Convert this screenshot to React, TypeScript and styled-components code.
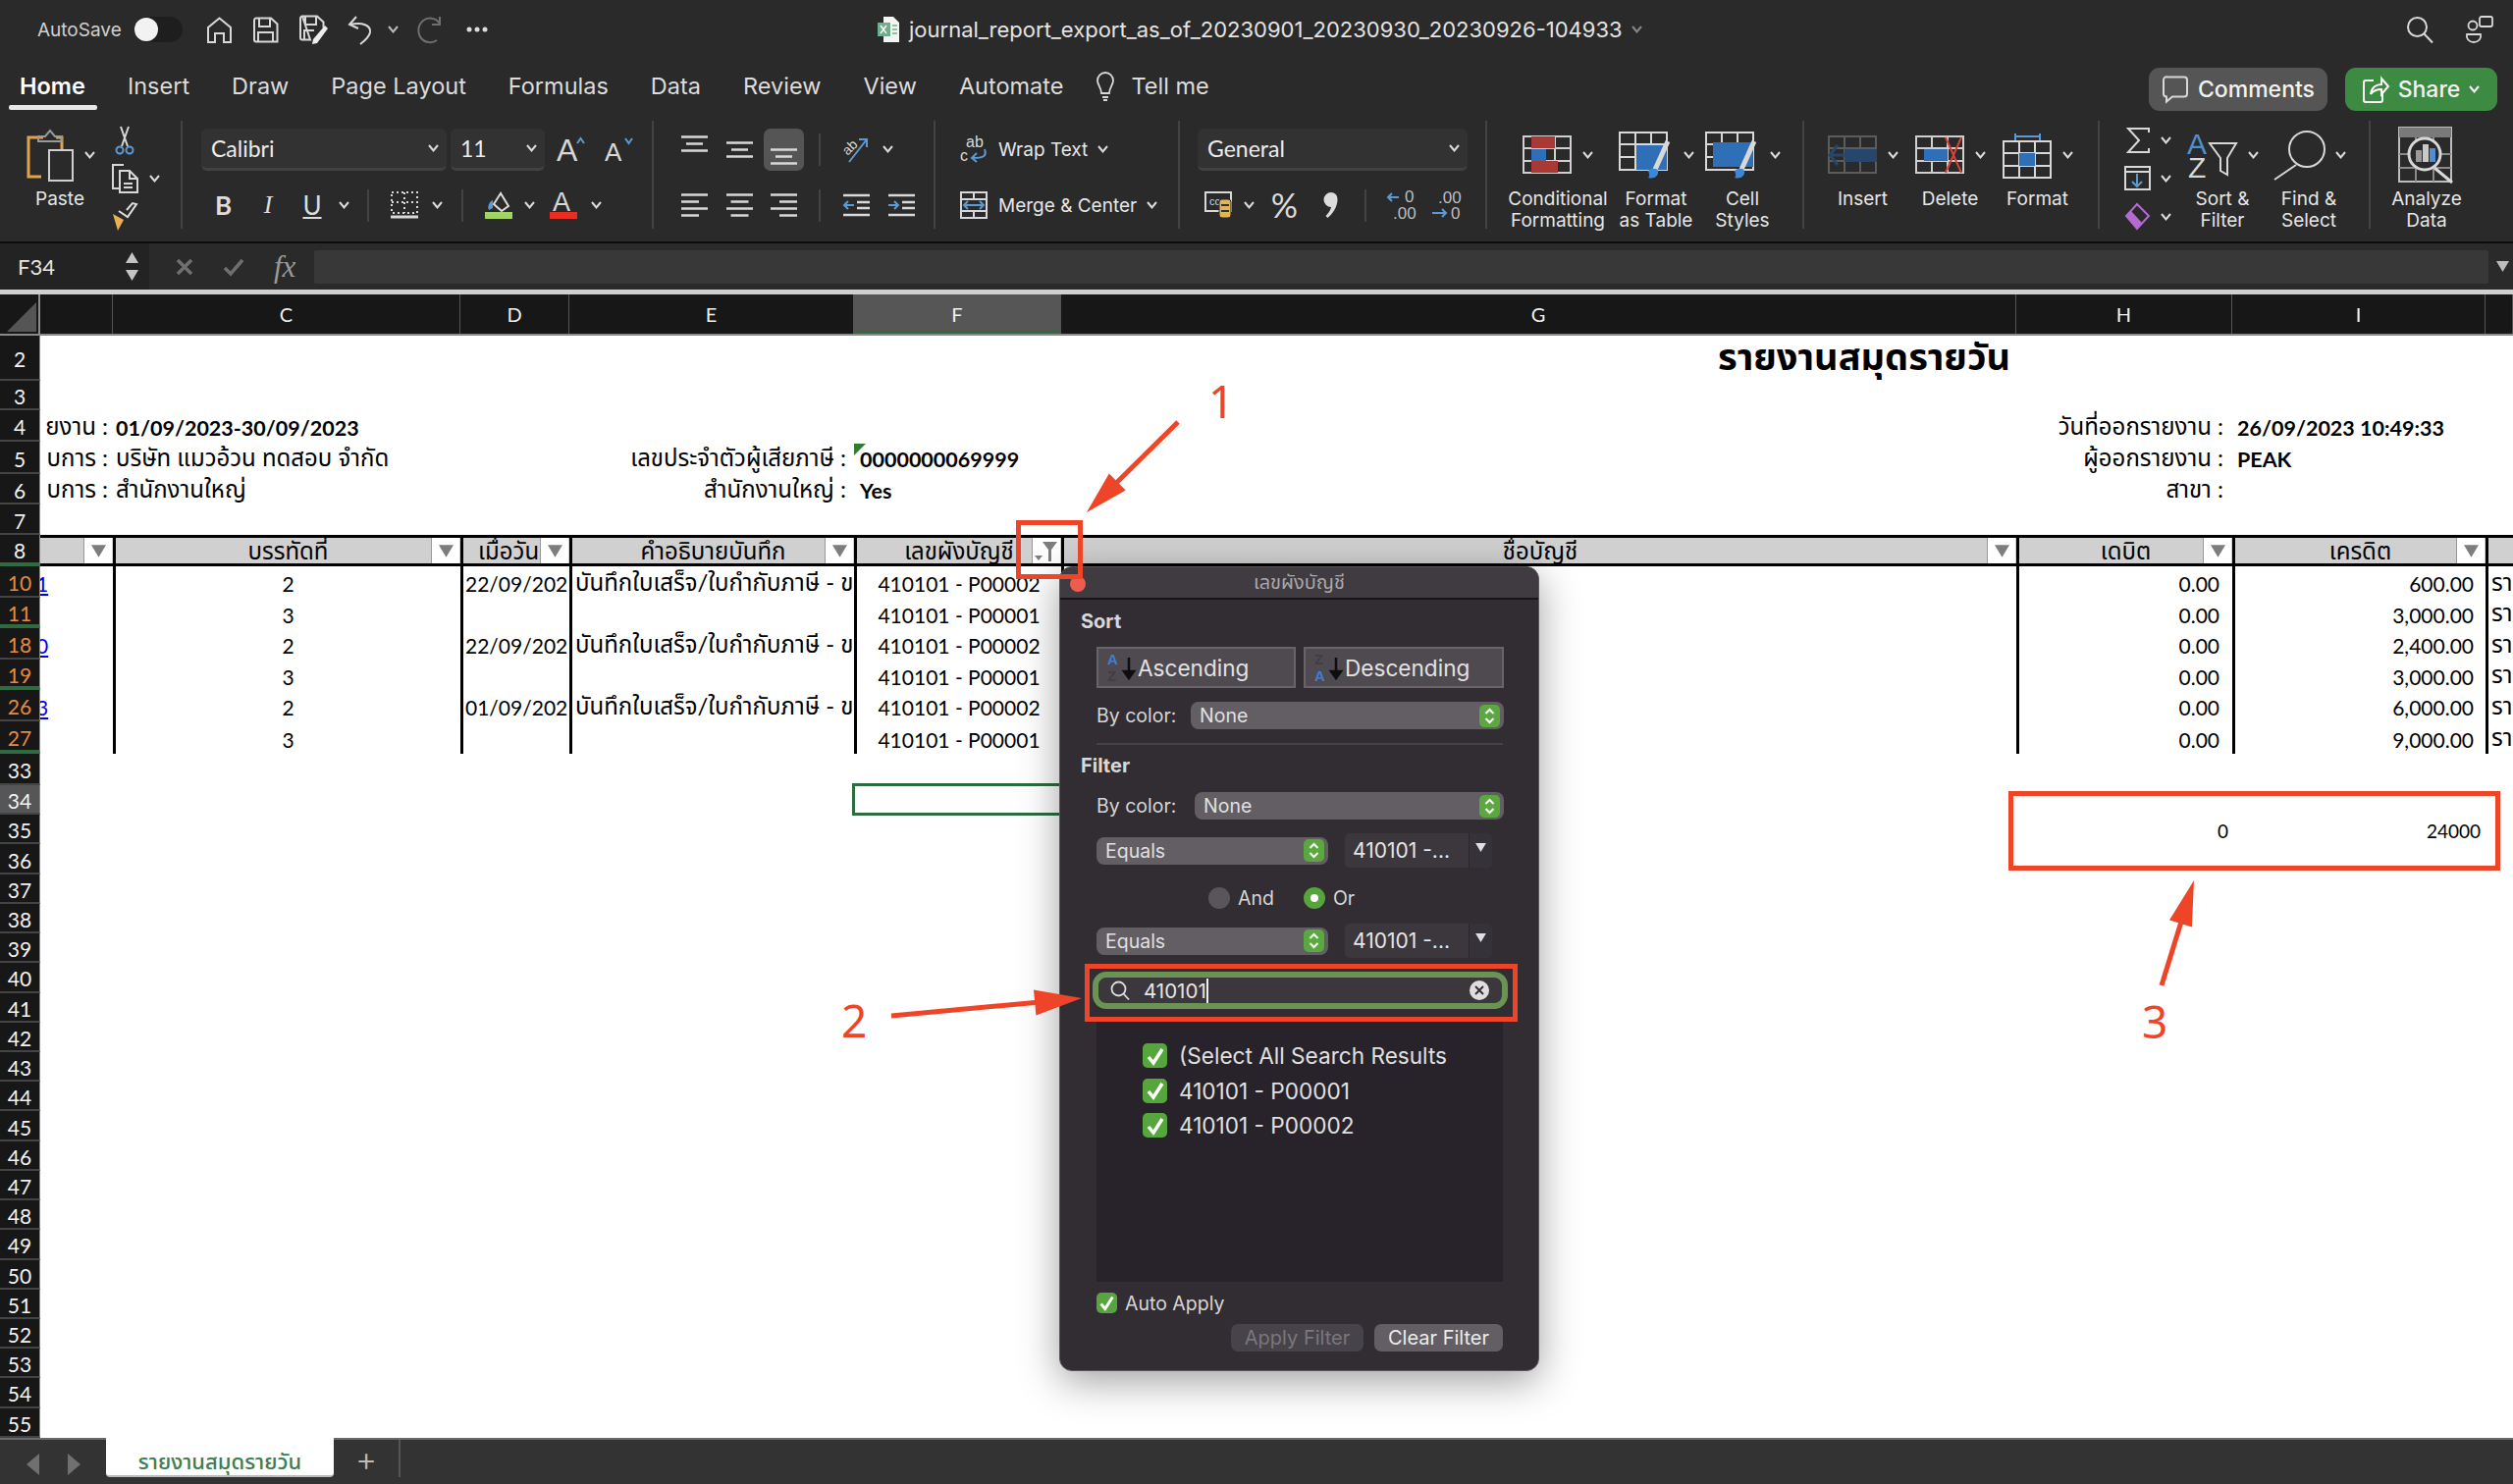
import React from "react";
import styled, { createGlobalStyle } from "styled-components";

const UI = `Inter, "Noto Sans", "Noto Sans Thai", "DejaVu Sans", sans-serif`;
const CELL = `Lato, "Noto Sans Thai", "Noto Sans", "DejaVu Sans", sans-serif`;

const GlobalStyle = createGlobalStyle`
    html, body { margin: 0; padding: 0; background: #2a2a2a; }
    body { font-family: ${UI}; }
    * { box-sizing: border-box; }
`;

const Page = styled.div`
    position: relative;
    width: 2560px;
    height: 1512px;
    overflow: hidden;
    display: flex;
    flex-direction: column;
    background: #2a2a2a;
    color: #e6e6e6;
`;

/* ---------- title bar ---------- */
const TitleBar = styled.div`
    height: 58px;
    display: flex;
    align-items: center;
    padding: 2px 20px 0 38px;
`;
const AutoSave = styled.span`
    width: 99px;
    font-size: 19px;
    color: #d0d0d0;
`;
const Toggle = styled.span`
    width: 49px;
    height: 26px;
    border-radius: 13px;
    background: #1e1e1e;
    display: flex;
    align-items: center;
    &::before {
        content: "";
        width: 24px;
        height: 24px;
        border-radius: 50%;
        background: #f2f2f2;
    }
`;
const QuickSlot = styled.span<{ $w: number }>`
    width: ${(p) => p.$w}px;
    flex: none;
    display: flex;
    align-items: center;
    justify-content: center;
`;
const FileTitle = styled.div`
    margin-left: 372px;
    display: flex;
    align-items: center;
    gap: 9px;
    font-size: 22px;
    color: #e4e4e4;
    white-space: nowrap;
`;
const TitleRight = styled.div`
    margin-left: auto;
    display: flex;
    align-items: center;
    gap: 33px;
`;

/* ---------- tabs ---------- */
const TabRow = styled.div`
    height: 54px;
    display: flex;
    align-items: flex-start;
    padding: 12px 16px 0 20px;
    gap: 43px;
`;
const Tab = styled.div<{ $active?: boolean }>`
    position: relative;
    font-size: 23.5px;
    line-height: 36px;
    font-weight: ${(p) => (p.$active ? 600 : 400)};
    color: ${(p) => (p.$active ? "#fff" : "#dcdcdc")};
    white-space: nowrap;
    ${(p) =>
        p.$active &&
        `&::after {
            content: "";
            position: absolute;
            left: -11px;
            right: -12px;
            bottom: -6px;
            height: 5px;
            border-radius: 2px;
            background: #e8e8e8;
        }`}
`;
const TellMe = styled(Tab)`
    margin-left: -10px;
    display: flex;
    align-items: center;
    gap: 16px;
`;
const TabActions = styled.div`
    margin-left: auto;
    display: flex;
    gap: 18px;
    margin-top: -1px;
`;
const PillButton = styled.div<{ $bg: string; $w: number }>`
    width: ${(p) => p.$w}px;
    height: 44px;
    border-radius: 11px;
    background: ${(p) => p.$bg};
    display: flex;
    align-items: center;
    justify-content: center;
    gap: 9px;
    font-size: 23px;
    font-weight: 500;
    color: #f2f2f2;
`;

/* ---------- ribbon ---------- */
const Ribbon = styled.div`
    height: 136px;
    display: flex;
    padding-top: 11px;
    border-bottom: 2px solid #0c0c0c;
`;
const Group = styled.div<{ $w: number; $pl: number; $last?: boolean; $stack?: boolean }>`
    width: ${(p) => p.$w}px;
    height: 110px;
    padding-left: ${(p) => p.$pl}px;
    flex: none;
    border-right: ${(p) => (p.$last ? "none" : "2px solid #434343")};
    display: ${(p) => (p.$stack ? "grid" : "flex")};
    grid-template-rows: 58px 56px;
    align-items: flex-start;
`;
const ToolRow = styled.div`
    display: flex;
    align-items: center;
    height: 100%;
`;
const Slot = styled.span<{ $w: number; $pb?: number }>`
    width: ${(p) => p.$w}px;
    flex: none;
    display: flex;
    align-items: center;
    justify-content: center;
    padding-bottom: ${(p) => p.$pb ?? 0}px;
`;
const SlotText = styled(Slot)<{ $size: number; $bold?: boolean; $serif?: boolean }>`
    font-family: ${(p) => (p.$serif ? `"Liberation Serif", serif` : CELL)};
    font-size: ${(p) => p.$size}px;
    font-weight: ${(p) => (p.$bold ? 700 : 400)};
    color: #dcdcdc;
    line-height: 1;
`;
const VDiv = styled.span`
    width: 2px;
    height: 33px;
    background: #434343;
`;
const Combo = styled.div<{ $w: number; $ml?: number }>`
    width: ${(p) => p.$w}px;
    margin-left: ${(p) => p.$ml ?? 0}px;
    height: 43px;
    flex: none;
    border-radius: 6px;
    background: #323232;
    border-bottom: 3px solid #424242;
    display: flex;
    align-items: center;
    justify-content: space-between;
    padding: 0 8px 0 10px;
    font-family: ${CELL};
    font-size: 23px;
    color: #ececec;
`;
const AlignActive = styled.span`
    width: 41px;
    height: 43px;
    margin: 0 2px;
    flex: none;
    border-radius: 7px;
    background: #555;
    display: flex;
    align-items: center;
    justify-content: center;
    padding-top: 14px;
`;
const WrapLine = styled.div`
    display: flex;
    align-items: center;
    height: 100%;
    gap: 10px;
    font-size: 19px;
    white-space: nowrap;
`;
const WrapIcon = styled.span`
    width: 30px;
    display: flex;
    justify-content: center;
`;
const BigTool = styled.div<{ $w: number }>`
    width: ${(p) => p.$w}px;
    flex: none;
    display: flex;
    flex-direction: column;
    align-items: center;
`;
const BigIcon = styled.div`
    height: 69px;
    display: flex;
    align-items: center;
    gap: 10px;
`;
const BigLabel = styled.div`
    font-size: 19px;
    line-height: 22px;
    text-align: center;
    white-space: pre-line;
    color: #e6e6e6;
`;
const SmallCol = styled.div<{ $w: number }>`
    width: ${(p) => p.$w}px;
    flex: none;
    display: grid;
    grid-template-rows: repeat(3, 39px);
`;
const SmallTool = styled.div`
    display: flex;
    align-items: center;
    gap: 10px;
`;

/* ---------- formula bar ---------- */
const FormulaBar = styled.div`
    height: 47px;
    display: flex;
    align-items: center;
`;
const NameBox = styled.div`
    width: 152px;
    height: 47px;
    flex: none;
    background: #232323;
    display: flex;
    align-items: center;
    justify-content: space-between;
    padding: 0 11px 0 18px;
    font-family: ${CELL};
    font-size: 22px;
`;
const Spinner = styled.span`
    display: flex;
    flex-direction: column;
    gap: 7px;
`;
const FormulaTools = styled.div`
    width: 168px;
    flex: none;
    display: flex;
    align-items: center;
    padding-left: 27px;
    gap: 30px;
`;
const FormulaFx = styled.span`
    font-family: "Liberation Serif", serif;
    font-style: italic;
    font-size: 31px;
    color: #9a9a9a;
`;
const FormulaInput = styled.div`
    width: 2215px;
    height: 34px;
    background: #383838;
    border-radius: 2px;
    flex: none;
`;
const FormulaDrop = styled.span`
    margin-left: 8px;
    display: flex;
`;
const LightRule = styled.div`
    height: 5px;
    background: #cfcfcf;
`;

/* ---------- sheet ---------- */
const COLUMNS = "41px 74px 354px 111px 290px 211px 973px 220px 258px 28px";

const ColHeader = styled.div`
    height: 42px;
    display: grid;
    grid-template-columns: ${COLUMNS};
    background: #171717;
    border-bottom: 2px solid #8a8a8a;
`;
const ColCell = styled.div<{ $sel?: boolean }>`
    display: flex;
    align-items: center;
    justify-content: center;
    border-right: 1px solid #555;
    font-family: ${CELL};
    font-size: 20px;
    color: #f0f0f0;
    background: ${(p) => (p.$sel ? "#565656" : "transparent")};
    box-shadow: ${(p) => (p.$sel ? "inset 0 -3px 0 #2e6b40" : "none")};
`;
const Corner = styled(ColCell)`
    border-right: 2px solid #8a8a8a;
    align-items: flex-end;
    justify-content: flex-end;
    padding: 0 2px 2px 0;
`;
const SheetBody = styled.div`
    flex: 1;
    background: #fff;
    font-family: ${CELL};
    color: #000;
    font-size: 21px;
`;
const SheetRow = styled.div<{ $h: number }>`
    height: ${(p) => p.$h}px;
    display: grid;
    grid-template-columns: ${COLUMNS};
    grid-template-rows: ${(p) => p.$h}px;
`;
const RowHead = styled.div<{ $tone?: "filtered" | "selected"; $green?: boolean }>`
    grid-column: 1;
    background: ${(p) => (p.$tone === "selected" ? "#565656" : "#171717")};
    color: ${(p) => (p.$tone === "filtered" ? "#e8893c" : "#f2f2f2")};
    border-bottom: ${(p) => (p.$green ? "4px solid #2e6b40" : "2px solid #444")};
    border-right: 1px solid #8a8a8a;
    display: flex;
    align-items: center;
    justify-content: center;
    padding-top: 3px;
    font-size: 21px;
`;
const Cell = styled.div<{
    $col: number;
    $span?: number;
    $align?: "left" | "center" | "right";
    $bold?: boolean;
    $line?: boolean;
    $pad?: number;
    $size?: number;
}>`
    grid-column: ${(p) => p.$col} / span ${(p) => p.$span ?? 1};
    min-width: 0;
    overflow-x: clip;
    overflow-y: visible;
    white-space: nowrap;
    display: flex;
    align-items: center;
    padding-top: 3px;
    justify-content: ${(p) =>
        p.$align === "right" ? "flex-end" : p.$align === "center" ? "center" : "flex-start"};
    padding-left: ${(p) => (p.$align === "right" ? 0 : p.$pad ?? 0)}px;
    padding-right: ${(p) => (p.$align === "right" ? p.$pad ?? 0 : 0)}px;
    font-weight: ${(p) => (p.$bold ? 700 : 400)};
    font-size: ${(p) => p.$size ?? 21}px;
    border-left: ${(p) => (p.$line ? "3px solid #000" : "0")};
`;
const TitleCell = styled(Cell)`
    padding-top: 0;
    overflow: visible;
`;
const LinkText = styled.span`
    color: #0000ee;
    text-decoration: underline;
    margin-left: -4px;
`;
const GreenCorner = styled.span`
    position: absolute;
    left: 870px;
    top: 452px;
    width: 0;
    height: 0;
    border-top: 12px solid #2e7d32;
    border-right: 12px solid transparent;
`;
const HeadCell = styled.div<{ $col: number; $first?: boolean }>`
    grid-column: ${(p) => p.$col};
    min-width: 0;
    background: #d0d0d0;
    border-top: 3px solid #000;
    border-bottom: 3px solid #000;
    border-left: ${(p) => (p.$first ? "0" : "3px solid #000")};
    display: flex;
    align-items: stretch;
`;
const HeadText = styled.div<{ $left?: number }>`
    flex: 1;
    min-width: 0;
    overflow-x: clip;
    overflow-y: visible;
    white-space: nowrap;
    display: flex;
    align-items: center;
    justify-content: ${(p) => (p.$left ? "flex-start" : "center")};
    padding-left: ${(p) => p.$left ?? 30}px;
    padding-top: 3px;
    font-size: 24px;
`;
const FilterBtn = styled.div`
    width: 29px;
    flex: none;
    margin-right: 1px;
    background: #fff;
    border-left: 1px solid #999;
    display: flex;
    align-items: center;
    justify-content: center;
`;
const SelectedCell = styled.div`
    grid-column: 6;
    border: 3px solid #2e6b40;
    margin: -2px -1px -1px -2px;
`;

const SheetTabs = styled.div`
    height: 47px;
    background: #333;
    display: flex;
    align-items: flex-start;
    border-top: 2px solid #6a6a6a;
`;
const TabNav = styled.div`
    width: 108px;
    height: 45px;
    flex: none;
    display: flex;
    align-items: center;
    justify-content: space-around;
    padding: 4px 12px 0 12px;
`;
const SheetTab = styled.div`
    width: 232px;
    height: 40px;
    margin-top: -2px;
    padding-top: 12px;
    background: #fff;
    border-radius: 0 0 4px 4px;
    border-bottom: 2px solid #bbb;
    display: flex;
    align-items: center;
    justify-content: center;
    color: #3d7d52;
    font-family: ${CELL};
    font-size: 22px;
    font-weight: 500;
`;
const AddSheet = styled.div`
    width: 68px;
    height: 38px;
    border-right: 2px solid #555;
    display: flex;
    align-items: center;
    justify-content: center;
    color: #bbb;
    font-size: 34px;
    font-weight: 300;
`;

/* ---------- filter popup ---------- */
const Popup = styled.div`
    position: absolute;
    left: 1079px;
    top: 577px;
    width: 489px;
    height: 820px;
    border-radius: 13px;
    background: #322d33;
    border: 1px solid #5a565b;
    box-shadow: 0 10px 40px rgba(0, 0, 0, 0.38);
    display: flex;
    flex-direction: column;
    overflow: hidden;
    font-size: 19.5px;
    color: #d6d6d6;
`;
const PopupTitle = styled.div`
    position: relative;
    height: 33px;
    flex: none;
    background: #3f3b41;
    border-bottom: 2px solid #171518;
    display: flex;
    align-items: center;
    justify-content: center;
    color: #a9a7aa;
    font-size: 20px;
`;
const RedDot = styled.span`
    position: absolute;
    left: 10px;
    top: 9px;
    width: 16px;
    height: 16px;
    border-radius: 50%;
    background: #ee5c50;
`;
const PopupBody = styled.div`
    padding: 10px 36px 0 37px;
    display: flex;
    flex-direction: column;
`;
const SectionLabel = styled.div<{ $mt?: number }>`
    margin: ${(p) => p.$mt ?? 0}px 0 0 -16px;
    font-weight: 700;
    height: 24px;
    line-height: 24px;
    font-size: 20px;
    color: #d8d8d8;
`;
const SortButtons = styled.div`
    display: grid;
    grid-template-columns: 203px 204px;
    gap: 8px;
    margin-top: 14px;
`;
const SortButton = styled.div`
    height: 42px;
    background: #4f4a50;
    border: 2px solid #686469;
    display: flex;
    align-items: center;
    padding-left: 8px;
    gap: 0;
    font-size: 22.6px;
    color: #e2e2e2;
`;
const FieldRow = styled.div<{ $mt: number }>`
    display: flex;
    align-items: center;
    margin-top: ${(p) => p.$mt}px;
`;
const FieldLabel = styled.span<{ $w: number }>`
    width: ${(p) => p.$w}px;
    flex: none;
`;
const PopSelect = styled.div<{ $w: number }>`
    width: ${(p) => p.$w}px;
    height: 28px;
    flex: none;
    background: #625e63;
    border-radius: 8px;
    display: flex;
    align-items: center;
    justify-content: space-between;
    padding: 0 4px 0 9px;
    color: #e0e0e0;
`;
const Stepper = styled.span`
    width: 21px;
    height: 23px;
    border-radius: 5px;
    background: #5aa83f;
    display: flex;
    align-items: center;
    justify-content: center;
`;
const PopDivider = styled.div`
    height: 2px;
    margin-top: 14px;
    background: #454147;
`;
const ValueBox = styled.div`
    margin-left: 17px;
    width: 150px;
    height: 35px;
    flex: none;
    display: flex;
    border-radius: 5px;
    overflow: hidden;
    background: #3b373d;
    font-size: 21px;
    color: #e6e6e6;
`;
const ValueText = styled.span`
    flex: 1;
    padding-left: 8px;
    display: flex;
    align-items: center;
`;
const ValueDrop = styled.span`
    width: 24px;
    background: #36323a;
    display: flex;
    justify-content: center;
    padding-top: 10px;
    border-left: 1px solid #2a262c;
`;
const RadioRow = styled.div`
    display: flex;
    align-items: center;
    margin: 19px 0 0 114px;
    height: 24px;
`;
const Radio = styled.span<{ $on?: boolean; $ml?: number }>`
    width: 22px;
    height: 22px;
    border-radius: 50%;
    margin-left: ${(p) => p.$ml ?? 0}px;
    margin-right: 8px;
    background: ${(p) => (p.$on ? "#56a53c" : "#59555a")};
    display: flex;
    align-items: center;
    justify-content: center;
    &::after {
        content: "";
        width: 8px;
        height: 8px;
        border-radius: 50%;
        background: ${(p) => (p.$on ? "#fff" : "transparent")};
    }
`;
const SearchField = styled.div`
    margin: 14px 0 0 -4px;
    width: 423px;
    height: 38px;
    flex: none;
    border: 6px solid #6b9454;
    border-radius: 14px;
    background: #3b373d;
    display: flex;
    align-items: center;
    padding: 0 13px 0 12px;
    font-size: 20.5px;
    color: #e6e6e6;
`;
const SearchValue = styled.span`
    margin-left: 14px;
    flex: 1;
    display: flex;
    align-items: center;
`;
const Caret = styled.span`
    width: 2px;
    height: 25px;
    background: #eee;
`;
const ClearCircle = styled.span`
    width: 20px;
    height: 20px;
    border-radius: 50%;
    background: #dedede;
    color: #333;
    display: flex;
    align-items: center;
    justify-content: center;
`;
const ValueList = styled.div`
    margin-top: 12px;
    height: 266px;
    background: #28232a;
    padding: 23px 0 0 47px;
    display: flex;
    flex-direction: column;
    gap: 10.5px;
`;
const ListItem = styled.div`
    display: flex;
    align-items: center;
    gap: 12px;
    font-size: 22.6px;
    height: 25px;
    color: #e0e0e0;
`;
const CheckBox = styled.span<{ $s: number }>`
    width: ${(p) => p.$s}px;
    height: ${(p) => p.$s}px;
    flex: none;
    border-radius: 5px;
    background: #57a63d;
    display: flex;
    align-items: center;
    justify-content: center;
`;
const AutoApply = styled.div`
    margin-top: 11px;
    display: flex;
    align-items: center;
    gap: 8px;
    height: 21px;
`;
const PopActions = styled.div`
    margin-top: 11px;
    display: flex;
    justify-content: flex-end;
    gap: 11px;
`;
const PopAction = styled.div<{ $w: number; $off?: boolean }>`
    width: ${(p) => p.$w}px;
    height: 28px;
    border-radius: 7px;
    background: ${(p) => (p.$off ? "#47434a" : "#625e63")};
    color: ${(p) => (p.$off ? "#7a777c" : "#ececec")};
    display: flex;
    align-items: center;
    justify-content: center;
    font-size: 20px;
`;

/* ---------- annotations ---------- */
const RedBox = styled.div<{ $x: number; $y: number; $w: number; $h: number }>`
    position: absolute;
    left: ${(p) => p.$x}px;
    top: ${(p) => p.$y}px;
    width: ${(p) => p.$w}px;
    height: ${(p) => p.$h}px;
    border: 5px solid #ee4528;
`;
const Callout = styled.div<{ $x: number; $y: number }>`
    position: absolute;
    left: ${(p) => p.$x}px;
    top: ${(p) => p.$y}px;
    font-family: "Noto Sans", sans-serif;
    font-size: 46px;
    line-height: 50px;
    color: #ee4528;
`;
const ArrowLayer = styled.svg`
    position: absolute;
    left: 0;
    top: 0;
    pointer-events: none;
`;

/* ---------- icons ---------- */
const STROKE = "#d8d8d8";
const IconSvg = styled.svg`
    flex: none;
    display: block;
    overflow: visible;
`;
const Svg = ({ w, h, children, stroke = STROKE, sw = 2 }: { w: number; h: number; children?: React.ReactNode; stroke?: string; sw?: number }) => (
    <IconSvg width={w} height={h} viewBox={`0 0 ${w} ${h}`} fill="none" stroke={stroke} strokeWidth={sw}>
        {children}
    </IconSvg>
);
const Chev = ({ color = "#dcdcdc" }: { color?: string }) => (
    <Svg w={11} h={8} stroke={color} sw={2}>
        <path d="M1 1l4.500 5.500L10 1" />
    </Svg>
);
const Tri = ({ up, color = "#9a9a9a", w = 13, h = 11 }: { up?: boolean; color?: string; w?: number; h?: number }) => (
    <IconSvg width={w} height={h} viewBox="0 0 12 10">
        <path d={up ? "M6 0l6 10H0z" : "M0 0h12L6 10z"} fill={color} />
    </IconSvg>
);
const HomeIcon = () => (
    <Svg w={27} h={27}><path d="M2 26V11L13.500 1.500 25 11v15h-7v-9H9v9z" /></Svg>
);
const SaveIcon = () => (
    <Svg w={27} h={27}><path d="M4 1.500h15l6.500 6v18H4a2 2 0 0 1-2-2v-20a2 2 0 0 1 2-2z" /><path d="M7 2v8h11V2M6 25v-9h15v9" /></Svg>
);
const SaveAsIcon = () => (
    <Svg w={30} h={30}>
        <path d="M4 1.500h15l6.500 6v6M12 25.500H4a2 2 0 0 1-2-2v-20a2 2 0 0 1 2-2z" /><path d="M7 2v8h11V2M6 25v-9h10" />
        <path d="M27 11l3 3-11 15-5 1 1-5z" fill="#eee" stroke="none" />
    </Svg>
);
const UndoIcon = () => (
    <Svg w={26} h={29}><path d="M9 1L2 9l9 4M3 9c12-3 21 1 20 8-1 5-6 9-10 12" /></Svg>
);
const RedoIcon = () => (
    <Svg w={27} h={29} stroke="#6f6f6f"><path d="M24 8C20 2 12 1 7 5c-6 5-6 14-1 19 4 4 11 4 15 1M24 1v8h-8" /></Svg>
);
const ExcelFile = () => (
    <IconSvg width={23} height={26} viewBox="0 0 23 26">
        <path d="M6 0h10l6 6v20H6z" fill="#f4f4f4" />
        <rect x="0" y="6" width="13" height="14" fill="#6fae8a" />
        <path d="M3 9l6 8M9 9l-6 8" stroke="#fff" strokeWidth="1.500" />
        <path d="M15 9h5M15 13h5M15 17h5" stroke="#8cc3a0" strokeWidth="2" />
    </IconSvg>
);
const SearchIcon = () => (
    <Svg w={28} h={28}><circle cx="11.500" cy="11.500" r="9.500" /><path d="M18 18l9 9.500" /></Svg>
);
const PeopleIcon = () => (
    <Svg w={28} h={28} sw={1.800}><rect x="14" y="1" width="13" height="10" rx="2" /><circle cx="7" cy="10" r="4.500" /><path d="M1 19h14c1 4-2 8-7 8s-8-4-7-8z" /></Svg>
);
const BulbIcon = () => (
    <Svg w={20} h={30} sw={1.800}><path d="M6 22c0-6-4-8-4-13a8 8 0 0 1 16 0c0 5-4 7-4 13zM7 26h6M8 29h4" /></Svg>
);
const CommentIcon = () => (
    <Svg w={28} h={28}><path d="M6 1.500h17a3 3 0 0 1 3 3v14a3 3 0 0 1-3 3H11l-6 5v-5a3 3 0 0 1-3-3v-14a3 3 0 0 1 4-3z" /></Svg>
);
const ShareIcon = () => (
    <Svg w={27} h={28} stroke="#fff"><path d="M11 5H3a2 2 0 0 0-2 2v18a2 2 0 0 0 2 2h15a2 2 0 0 0 2-2v-7M8 19c1-7 6-10 11-10V3l7 8-7 8v-5c-4 0-8 1-11 5z" /></Svg>
);
const PasteIcon = () => (
    <Svg w={50} h={54}>
        <path d="M18 9H3v40h13" stroke="#e2a34a" strokeWidth="3" />
        <path d="M31 9h6v12" stroke="#e2a34a" strokeWidth="3" />
        <path d="M13 13h24V8h-7l-5-6-5 6h-7z" stroke="#9a9a9a" />
        <rect x="24" y="22" width="24" height="31" fill="#2a2a2a" stroke="#cfcfcf" />
    </Svg>
);
const ScissorsIcon = () => (
    <Svg w={20} h={30}>
        <path d="M14 1L7 21M6 1l7 20" />
        <circle cx="5" cy="25" r="3.500" stroke="#5b9bd5" /><circle cx="15" cy="25" r="3.500" stroke="#5b9bd5" />
    </Svg>
);
const CopyIcon = () => (
    <Svg w={29} h={30}>
        <path d="M13 1H2v24h6" /><path d="M9 7h10l8 8v14H9z" /><path d="M19 7v8h8M13 20h9M13 24h9" />
    </Svg>
);
const BrushIcon = () => (
    <IconSvg width={30} height={30} viewBox="0 0 30 30">
        <path d="M3 12l11 6-6 11z" fill="#eab04f" />
        <path d="M9 9l9 6 9-13-4-1-6 7" fill="none" stroke="#ddd" strokeWidth="2" />
    </IconSvg>
);
const FontGrow = ({ up }: { up: boolean }) => (
    <Svg w={32} h={28}>
        <text x="2" y="26" fontSize={up ? 32 : 26} fill="#d8d8d8" stroke="none" fontFamily="Liberation Sans">A</text>
        <path d={up ? "M23 8l3.500-5 3.500 5" : "M23 3l3.500 5 3.500-5"} stroke="#5b9bd5" />
    </Svg>
);
const BorderIcon = () => (
    <Svg w={28} h={28}>
        <rect x="1" y="1" width="26" height="21" strokeDasharray="2 3" />
        <path d="M14 1v21M1 11h26" strokeDasharray="2 3" />
        <path d="M0 26h28" strokeWidth="3" />
    </Svg>
);
const FillIcon = () => (
    <IconSvg width={30} height={30} viewBox="0 0 30 30">
        <path d="M10 14L17 3l8 13-7 5z" fill="none" stroke="#ddd" strokeWidth="2" />
        <path d="M5 20c-2-4 1-9 4-10v8z" fill="#5b9bd5" />
        <rect x="1" y="22" width="28" height="7" fill="#a2d465" />
    </IconSvg>
);
const FontColorIcon = () => (
    <IconSvg width={30} height={30} viewBox="0 0 30 30">
        <text x="4" y="21" fontSize="27" fill="#d8d8d8" fontFamily="Liberation Sans">A</text>
        <rect x="1" y="22" width="28" height="7" fill="#ea2d21" />
    </IconSvg>
);
const Lines = ({ w, lens, align = "left", gap = 7 }: { w: number; lens: number[]; align?: "left" | "center" | "right"; gap?: number }) => (
    <Svg w={w} h={(lens.length - 1) * gap + 3} sw={2.500}>
        {lens.map((len, i) => {
            const x = align === "center" ? (w - len) / 2 : align === "right" ? w - len : 0;
            return <line key={i} x1={x} x2={x + len} y1={i * gap + 1.500} y2={i * gap + 1.500} />;
        })}
    </Svg>
);
const OrientIcon = () => (
    <IconSvg width={31} height={27} viewBox="0 0 31 27">
        <text x="0" y="14" fontSize="14" fill="#d8d8d8" fontFamily="Liberation Sans" transform="rotate(-45 8 10) translate(0 2)">ab</text>
        <path d="M8 26L26 3M18 3h8v8" fill="none" stroke="#5b9bd5" strokeWidth="2" />
    </IconSvg>
);
const IndentIcon = ({ dir }: { dir: "in" | "out" }) => (
    <IconSvg width={27} height={24} viewBox="0 0 27 24">
        <path d="M0 2h27M0 22h27M14 9h13M14 15h13" stroke="#d8d8d8" strokeWidth="2.500" fill="none" />
        <path d={dir === "out" ? "M11 12H1M5 8l-4 4 4 4" : "M0 12h10M6 8l4 4-4 4"} stroke="#5b9bd5" strokeWidth="2" fill="none" />
    </IconSvg>
);
const WrapIconSvg = () => (
    <IconSvg width={28} height={28} viewBox="0 0 28 28">
        <text x="6" y="12" fontSize="16" fill="#d8d8d8" fontFamily="Liberation Sans">ab</text>
        <text x="0" y="26" fontSize="16" fill="#d8d8d8" fontFamily="Liberation Sans">c</text>
        <path d="M25 14c3 8-3 9-12 9M17 18l-5 5 5 4" fill="none" stroke="#5b9bd5" strokeWidth="2" />
    </IconSvg>
);
const MergeIcon = () => (
    <IconSvg width={28} height={28} viewBox="0 0 28 28">
        <rect x="1" y="1" width="26" height="26" fill="none" stroke="#d8d8d8" strokeWidth="2" />
        <path d="M1 8h26M1 20h26M14 1v7M14 20v7" stroke="#d8d8d8" strokeWidth="2" />
        <path d="M4 14h20M8 10l-4 4 4 4M20 10l4 4-4 4" fill="none" stroke="#5b9bd5" strokeWidth="2" />
    </IconSvg>
);
const CurrencyIcon = () => (
    <IconSvg width={29} height={28} viewBox="0 0 29 28">
        <rect x="1" y="1" width="26" height="19" fill="none" stroke="#d8d8d8" strokeWidth="2" />
        <text x="5" y="14" fontSize="11" fill="#d8d8d8" fontFamily="Liberation Sans">cc</text>
        <rect x="15" y="8" width="12" height="19" rx="3" fill="#e0b45a" stroke="#2a2a2a" />
        <path d="M17 14h8M17 20h8" stroke="#333" strokeWidth="2" />
    </IconSvg>
);
const CommaIcon = () => (
    <IconSvg width={14} height={26} viewBox="0 0 14 26">
        <path d="M7 0a6.500 6.500 0 0 1 6.500 7c0 8-5 15-10 19l-2-2c3-3 5-6 5.500-9A6.500 6.500 0 0 1 7 0z" fill="#dcdcdc" />
    </IconSvg>
);
const DecimalIcon = ({ more }: { more: boolean }) => (
    <IconSvg width={31} height={30} viewBox="0 0 31 30" fontFamily="Liberation Sans" fontSize="17" fill="#bdbdbd">
        {more ? (
            <>
                <text x="19" y="12">0</text><text x="7" y="29">.00</text>
                <path d="M13 7H2M6 3L2 7l4 4" fill="none" stroke="#5b9bd5" strokeWidth="2" />
            </>
        ) : (
            <>
                <text x="7" y="13">.00</text><text x="20" y="29">0</text>
                <path d="M1 23h14M11 19l4 4-4 4" fill="none" stroke="#5b9bd5" strokeWidth="2" />
            </>
        )}
    </IconSvg>
);
const CellGrid = ({ color = "#cfcfcf", h = 39, children }: { color?: string; h?: number; children?: React.ReactNode }) => (
    <Svg w={51} h={h} stroke={color}>
        <rect x="1" y={h - 38} width="48" height="37" />
        <path d={`M17 ${h - 38}v37M33 ${h - 38}v37M1 ${h - 26}h48M1 ${h - 13}h48`} />
        {children}
    </Svg>
);
const CondIcon = () => (
    <CellGrid>
        <rect x="9" y="1" width="24" height="12" fill="#a83a36" stroke="none" />
        <rect x="9" y="14" width="15" height="12" fill="#2e6fb7" stroke="none" />
        <rect x="9" y="26" width="27" height="12" fill="#a83a36" stroke="none" />
    </CellGrid>
);
const Brush = () => (
    <>
        <path d="M36 41L50 10" stroke="#d8d8d8" strokeWidth="5" />
        <path d="M30 40c3-3 9-3 10 0 1 5-4 9-10 7 2-2 1-4 0-7z" fill="#3f86d3" stroke="none" />
    </>
);
const TableStyleIcon = () => (
    <Svg w={56} h={48}>
        <rect x="1" y="1" width="48" height="38" />
        <path d="M17 1v38M33 1v38M1 13h48M1 26h48" />
        <rect x="18" y="14" width="31" height="25" fill="#2e6fb7" stroke="none" />
        <Brush />
    </Svg>
);
const CellStyleIcon = () => (
    <Svg w={56} h={48}>
        <rect x="1" y="1" width="48" height="38" />
        <path d="M1 13h48M17 1v12M33 1v12M1 26h15M1 13v26" />
        <rect x="8" y="11" width="41" height="25" fill="#2e6fb7" stroke="none" />
        <Brush />
    </Svg>
);
const InsertIcon = () => (
    <CellGrid color="#5c5c5c">
        <rect x="17" y="14" width="33" height="13" fill="#27466b" stroke="none" />
        <path d="M26 20H2M10 10L2 20l8 10" stroke="#27466b" strokeWidth="3" />
    </CellGrid>
);
const DeleteIcon = () => (
    <CellGrid>
        <rect x="9" y="14" width="24" height="12" fill="#2e6fb7" stroke="none" />
        <path d="M31 2l16 36M47 2L31 38" stroke="#d8423a" />
    </CellGrid>
);
const FormatIcon = () => (
    <Svg w={51} h={48}>
        <path d="M13 2v7M38 2v7M13 5h25" stroke="#5b9bd5" />
        <rect x="1" y="10" width="48" height="37" />
        <path d="M17 10v37M33 10v37M1 22h48M1 35h48" />
        <rect x="17" y="22" width="16" height="13" fill="#2e6fb7" stroke="none" />
    </Svg>
);
const SigmaIcon = () => (
    <Svg w={24} h={26}><path d="M23 5V1H2l11 12L2 25h21v-4" /></Svg>
);
const FillDown = () => (
    <Svg w={27} h={25}>
        <rect x="1" y="1" width="25" height="23" />
        <path d="M1 6h25" />
        <path d="M13 8v13M8 16l5 5 5-5" stroke="#5b9bd5" />
    </Svg>
);
const Eraser = () => (
    <IconSvg width={27} height={27} viewBox="0 0 27 27">
        <path d="M13 1l12 12-12 13L2 13z" fill="none" stroke="#b56ad1" strokeWidth="2" />
        <path d="M2 13l11 13 5-6L7 8z" fill="#b56ad1" />
    </IconSvg>
);
const SortFilterIcon = () => (
    <IconSvg width={52} height={48} viewBox="0 0 52 48">
        <text x="0" y="23" fontSize="30" fill="#4f8fd0" fontFamily="Liberation Sans">A</text>
        <text x="1" y="47" fontSize="30" fill="#d8d8d8" fontFamily="Liberation Sans">Z</text>
        <path d="M23 12h27L41 27v17l-7-4V27z" fill="none" stroke="#d8d8d8" strokeWidth="2" />
    </IconSvg>
);
const FindIcon = () => (
    <Svg w={54} h={52}><circle cx="35" cy="20" r="18" /><path d="M24 36L2 51" /></Svg>
);
const AnalyzeIcon = () => (
    <IconSvg width={58} height={58} viewBox="0 0 58 58">
        <rect x="1" y="1" width="53" height="55" fill="none" stroke="#bdbdbd" strokeWidth="2" />
        <rect x="1" y="1" width="53" height="10" fill="#7a7a7a" />
        <path d="M1 28h53M1 42h53M18 11v45M36 11v45" stroke="#8a8a8a" strokeWidth="2" />
        <circle cx="27" cy="28" r="16" fill="#2a2a2a" stroke="#d8d8d8" strokeWidth="3" />
        <rect x="18" y="24" width="6" height="12" fill="#9a9a9a" />
        <rect x="25" y="18" width="6" height="18" fill="#c9c9c9" />
        <rect x="32" y="22" width="6" height="14" fill="#4f8fd0" />
        <path d="M37 42l18 15" stroke="#d8d8d8" strokeWidth="3" />
    </IconSvg>
);
const StepArrows = () => (
    <IconSvg width={11} height={17} viewBox="0 0 11 17">
        <path d="M1.500 6l4-4 4 4M1.500 11l4 4 4-4" fill="none" stroke="#fff" strokeWidth="2" />
    </IconSvg>
);
const Tick = ({ s }: { s: number }) => (
    <IconSvg width={s} height={s} viewBox="0 0 20 20">
        <path d="M3 11l5 6 9-14" fill="none" stroke="#fff" strokeWidth="3.500" />
    </IconSvg>
);
const SortGlyph = ({ asc }: { asc: boolean }) => (
    <IconSvg width={32} height={32} viewBox="0 0 32 32" fontFamily="Liberation Sans" fontWeight="700" fontSize="15">
        <text x="1" y="13" fill={asc ? "#3f7fcf" : "#413d42"}>{asc ? "A" : "Z"}</text>
        <text x="1" y="30" fill={asc ? "#413d42" : "#3f7fcf"}>{asc ? "Z" : "A"}</text>
        <path d="M23 6v20M18 20l5 7 5-7z" fill="#0e0e0e" stroke="#0e0e0e" strokeWidth="2.500" />
    </IconSvg>
);
const FilterMark = () => <Tri color="#7d7d7d" w={15} h={13} />;
const FunnelMark = () => (
    <IconSvg width={24} height={24} viewBox="0 0 24 24">
        <path d="M8 3h15l-6 8v12h-3V11z" fill="#7d7d7d" />
        <path d="M0 17h8l-4 5z" fill="#7d7d7d" />
    </IconSvg>
);

const arrowPoints = (x1: number, y1: number, x2: number, y2: number, len: number, half: number, tail: number) => {
    const d = Math.hypot(x2 - x1, y2 - y1);
    const ux = (x2 - x1) / d;
    const uy = (y2 - y1) / d;
    const bx = x2 - ux * len;
    const by = y2 - uy * len;
    const pts = [
        [x1 - uy * tail, y1 + ux * tail],
        [bx - uy * tail, by + ux * tail],
        [bx - uy * half, by + ux * half],
        [x2, y2],
        [bx + uy * half, by - ux * half],
        [bx + uy * tail, by - ux * tail],
        [x1 + uy * tail, y1 - ux * tail],
    ];
    return pts.map((p) => p.join(",")).join(" ");
};

/* ---------- sheet data ---------- */
const COL_HEADS: [string, boolean?][] = [["", false], ["C"], ["D"], ["E"], ["F", true], ["G"], ["H"], ["I"], [""]];

const HEADERS: { col: number; text: string; active?: boolean; left?: number }[] = [
    { col: 2, text: "" },
    { col: 3, text: "บรรทัดที่" },
    { col: 4, text: "เมื่อวัน", left: 15 },
    { col: 5, text: "คำอธิบายบันทึก" },
    { col: 6, text: "เลขผังบัญชี", active: true },
    { col: 7, text: "ชื่อบัญชี" },
    { col: 8, text: "เดบิต" },
    { col: 9, text: "เครดิต" },
];

const DATA = [
    { n: 10, h: 32, link: "1", line: 2, date: "22/09/202", memo: "บันทึกใบเสร็จ/ใบกำกับภาษี - ข", acct: "410101 - P00002", cr: "600.00" },
    { n: 11, h: 31, green: true, line: 3, acct: "410101 - P00001", cr: "3,000.00" },
    { n: 18, h: 32, link: "0", line: 2, date: "22/09/202", memo: "บันทึกใบเสร็จ/ใบกำกับภาษี - ข", acct: "410101 - P00002", cr: "2,400.00" },
    { n: 19, h: 31, green: true, line: 3, acct: "410101 - P00001", cr: "3,000.00" },
    { n: 26, h: 32, link: "3", line: 2, date: "01/09/202", memo: "บันทึกใบเสร็จ/ใบกำกับภาษี - ข", acct: "410101 - P00002", cr: "6,000.00" },
    { n: 27, h: 33, green: true, line: 3, acct: "410101 - P00001", cr: "9,000.00" },
];

const LOWER_ROWS = Array.from({ length: 20 }, (_, i) => 36 + i);
const THAI = 24;
const BOLD_NUM = 21.5;

export default function App() {
    return (
        <Page>
            <GlobalStyle />
            <TitleBar>
                <AutoSave>AutoSave</AutoSave>
                <Toggle />
                <QuickSlot $w={74}><HomeIcon /></QuickSlot>
                <QuickSlot $w={20}><SaveIcon /></QuickSlot>
                <QuickSlot $w={78}><SaveAsIcon /></QuickSlot>
                <QuickSlot $w={18}><UndoIcon /></QuickSlot>
                <QuickSlot $w={48}><Chev color="#bbb" /></QuickSlot>
                <QuickSlot $w={26}><RedoIcon /></QuickSlot>
                <QuickSlot $w={72}>
                    <Svg w={22} h={6} sw={0}>
                        <circle cx="3" cy="3" r="2.500" fill="#ddd" /><circle cx="11" cy="3" r="2.500" fill="#ddd" /><circle cx="19" cy="3" r="2.500" fill="#ddd" />
                    </Svg>
                </QuickSlot>
                <FileTitle>
                    <ExcelFile />
                    <span>journal_report_export_as_of_20230901_20230930_20230926-104933</span>
                    <Chev color="#888" />
                </FileTitle>
                <TitleRight>
                    <SearchIcon />
                    <PeopleIcon />
                </TitleRight>
            </TitleBar>

            <TabRow>
                <Tab $active>Home</Tab>
                <Tab>Insert</Tab>
                <Tab>Draw</Tab>
                <Tab>Page Layout</Tab>
                <Tab>Formulas</Tab>
                <Tab>Data</Tab>
                <Tab>Review</Tab>
                <Tab>View</Tab>
                <Tab>Automate</Tab>
                <TellMe><BulbIcon />Tell me</TellMe>
                <TabActions>
                    <PillButton $bg="#555" $w={182}><CommentIcon />Comments</PillButton>
                    <PillButton $bg="#3d8a42" $w={155}><ShareIcon />Share<Chev color="#fff" /></PillButton>
                </TabActions>
            </TabRow>

            <Ribbon>
                <Group $w={186} $pl={10}>
                    <BigTool $w={102}>
                        <BigIcon><PasteIcon /><Chev /></BigIcon>
                        <BigLabel>Paste</BigLabel>
                    </BigTool>
                    <SmallCol $w={60}>
                        <SmallTool><Slot $w={30}><ScissorsIcon /></Slot></SmallTool>
                        <SmallTool><Slot $w={30}><CopyIcon /></Slot><Chev /></SmallTool>
                        <SmallTool><Slot $w={30}><BrushIcon /></Slot></SmallTool>
                    </SmallCol>
                </Group>

                <Group $w={480} $pl={19} $stack>
                    <ToolRow>
                        <Combo $w={250}>Calibri<Chev /></Combo>
                        <Combo $w={96} $ml={4}>11<Chev /></Combo>
                        <Slot $w={52}><FontGrow up /></Slot>
                        <Slot $w={46}><FontGrow up={false} /></Slot>
                    </ToolRow>
                    <ToolRow>
                        <SlotText $w={45} $size={26} $bold>B</SlotText>
                        <SlotText $w={46} $size={26} $serif><i>I</i></SlotText>
                        <SlotText $w={44} $size={26}><u>U</u></SlotText>
                        <Slot $w={20}><Chev /></Slot>
                        <Slot $w={30}><VDiv /></Slot>
                        <Slot $w={44}><BorderIcon /></Slot>
                        <Slot $w={22}><Chev /></Slot>
                        <Slot $w={30}><VDiv /></Slot>
                        <Slot $w={44}><FillIcon /></Slot>
                        <Slot $w={18}><Chev /></Slot>
                        <Slot $w={52}><FontColorIcon /></Slot>
                        <Slot $w={14}><Chev /></Slot>
                    </ToolRow>
                </Group>

                <Group $w={287} $pl={18} $stack>
                    <ToolRow>
                        <Slot $w={46} $pb={11}><Lines w={27} lens={[27, 17, 27]} align="center" /></Slot>
                        <Slot $w={46}><Lines w={27} lens={[27, 17, 27]} align="center" /></Slot>
                        <AlignActive><Lines w={27} lens={[27, 17, 27]} align="center" /></AlignActive>
                        <Slot $w={28}><VDiv /></Slot>
                        <Slot $w={46}><OrientIcon /></Slot>
                        <Slot $w={18}><Chev /></Slot>
                    </ToolRow>
                    <ToolRow>
                        <Slot $w={46}><Lines w={27} lens={[27, 18, 27, 18]} /></Slot>
                        <Slot $w={46}><Lines w={27} lens={[27, 18, 27, 18]} align="center" /></Slot>
                        <Slot $w={45}><Lines w={27} lens={[27, 18, 27, 18]} align="right" /></Slot>
                        <Slot $w={28}><VDiv /></Slot>
                        <Slot $w={46}><IndentIcon dir="out" /></Slot>
                        <Slot $w={46}><IndentIcon dir="in" /></Slot>
                    </ToolRow>
                </Group>

                <Group $w={249} $pl={24} $stack>
                    <WrapLine><WrapIcon><WrapIconSvg /></WrapIcon>Wrap Text<Chev /></WrapLine>
                    <WrapLine><WrapIcon><MergeIcon /></WrapIcon>Merge &amp; Center<Chev /></WrapLine>
                </Group>

                <Group $w={313} $pl={18} $stack>
                    <ToolRow><Combo $w={275}>General<Chev /></Combo></ToolRow>
                    <ToolRow>
                        <Slot $w={42}><CurrencyIcon /></Slot>
                        <Slot $w={20}><Chev /></Slot>
                        <SlotText $w={53} $size={34}>%</SlotText>
                        <Slot $w={41}><CommaIcon /></Slot>
                        <Slot $w={30}><VDiv /></Slot>
                        <Slot $w={43}><DecimalIcon more /></Slot>
                        <Slot $w={48}><DecimalIcon more={false} /></Slot>
                    </ToolRow>
                </Group>

                <Group $w={323} $pl={10}>
                    <BigTool $w={124}>
                        <BigIcon><CondIcon /><Chev /></BigIcon>
                        <BigLabel>{"Conditional\nFormatting"}</BigLabel>
                    </BigTool>
                    <BigTool $w={76}>
                        <BigIcon><TableStyleIcon /><Chev /></BigIcon>
                        <BigLabel>{"Format\nas Table"}</BigLabel>
                    </BigTool>
                    <BigTool $w={100}>
                        <BigIcon><CellStyleIcon /><Chev /></BigIcon>
                        <BigLabel>{"Cell\nStyles"}</BigLabel>
                    </BigTool>
                </Group>

                <Group $w={301} $pl={15}>
                    <BigTool $w={89}><BigIcon><InsertIcon /><Chev /></BigIcon><BigLabel>Insert</BigLabel></BigTool>
                    <BigTool $w={89}><BigIcon><DeleteIcon /><Chev /></BigIcon><BigLabel>Delete</BigLabel></BigTool>
                    <BigTool $w={89}><BigIcon><FormatIcon /><Chev /></BigIcon><BigLabel>Format</BigLabel></BigTool>
                </Group>

                <Group $w={276} $pl={25}>
                    <SmallCol $w={56}>
                        <SmallTool><Slot $w={27}><SigmaIcon /></Slot><Chev /></SmallTool>
                        <SmallTool><Slot $w={27}><FillDown /></Slot><Chev /></SmallTool>
                        <SmallTool><Slot $w={27}><Eraser /></Slot><Chev /></SmallTool>
                    </SmallCol>
                    <BigTool $w={88}><BigIcon><SortFilterIcon /><Chev /></BigIcon><BigLabel>{"Sort &\nFilter"}</BigLabel></BigTool>
                    <BigTool $w={88}><BigIcon><FindIcon /><Chev /></BigIcon><BigLabel>{"Find &\nSelect"}</BigLabel></BigTool>
                </Group>

                <Group $w={145} $pl={7} $last>
                    <BigTool $w={100}><BigIcon><AnalyzeIcon /></BigIcon><BigLabel>{"Analyze\nData"}</BigLabel></BigTool>
                </Group>
            </Ribbon>

            <FormulaBar>
                <NameBox>
                    F34
                    <Spinner><Tri up color="#c4c4c4" /><Tri color="#c4c4c4" /></Spinner>
                </NameBox>
                <FormulaTools>
                    <Svg w={18} h={18} stroke="#6f6f6f" sw={3.500}><path d="M2 2l14 14M16 2L2 16" /></Svg>
                    <Svg w={22} h={18} stroke="#6f6f6f" sw={3.500}><path d="M2 10l6 6L20 2" /></Svg>
                    <FormulaFx>fx</FormulaFx>
                </FormulaTools>
                <FormulaInput />
                <FormulaDrop><Tri color="#bcbcbc" /></FormulaDrop>
            </FormulaBar>
            <LightRule />

            <ColHeader>
                <Corner>
                    <IconSvg width={30} height={30} viewBox="0 0 30 30"><path d="M0 30L30 0v30z" fill="#555" /></IconSvg>
                </Corner>
                {COL_HEADS.map(([label, sel], i) => (
                    <ColCell key={i} $sel={sel}>{label}</ColCell>
                ))}
            </ColHeader>

            <SheetBody>
                <SheetRow $h={46}>
                    <RowHead>2</RowHead>
                    <TitleCell $col={7} $span={3} $align="left" $pad={669} $bold $size={38}>รายงานสมุดรายวัน</TitleCell>
                </SheetRow>
                <SheetRow $h={30}><RowHead>3</RowHead></SheetRow>
                <SheetRow $h={32}>
                    <RowHead>4</RowHead>
                    <Cell $col={2} $align="right" $pad={5} $size={THAI}>ยงาน :</Cell>
                    <Cell $col={3} $bold $pad={3} $size={BOLD_NUM}>01/09/2023-30/09/2023</Cell>
                    <Cell $col={8} $align="right" $pad={9} $size={THAI}>วันที่ออกรายงาน :</Cell>
                    <Cell $col={9} $bold $pad={5} $size={BOLD_NUM}>26/09/2023 10:49:33</Cell>
                </SheetRow>
                <SheetRow $h={33}>
                    <RowHead>5</RowHead>
                    <Cell $col={2} $align="right" $pad={5} $size={THAI}>บการ :</Cell>
                    <Cell $col={3} $pad={3} $size={THAI}>บริษัท แมวอ้วน ทดสอบ จำกัด</Cell>
                    <Cell $col={5} $align="right" $pad={8} $size={THAI}>เลขประจำตัวผู้เสียภาษี :</Cell>
                    <Cell $col={6} $bold $pad={6} $size={BOLD_NUM}>0000000069999</Cell>
                    <Cell $col={8} $align="right" $pad={9} $size={THAI}>ผู้ออกรายงาน :</Cell>
                    <Cell $col={9} $bold $pad={5} $size={BOLD_NUM}>PEAK</Cell>
                </SheetRow>
                <SheetRow $h={31}>
                    <RowHead>6</RowHead>
                    <Cell $col={2} $align="right" $pad={5} $size={THAI}>บการ :</Cell>
                    <Cell $col={3} $pad={3} $size={THAI}>สำนักงานใหญ่</Cell>
                    <Cell $col={5} $align="right" $pad={8} $size={THAI}>สำนักงานใหญ่ :</Cell>
                    <Cell $col={6} $bold $pad={6} $size={BOLD_NUM}>Yes</Cell>
                    <Cell $col={8} $align="right" $pad={9} $size={THAI}>สาขา :</Cell>
                </SheetRow>
                <SheetRow $h={31}><RowHead>7</RowHead></SheetRow>
                <SheetRow $h={32}>
                    <RowHead $green>8</RowHead>
                    {HEADERS.map((h) => (
                        <HeadCell key={h.col} $col={h.col} $first={h.col === 2}>
                            <HeadText $left={h.left}>{h.text}</HeadText>
                            <FilterBtn>{h.active ? <FunnelMark /> : <FilterMark />}</FilterBtn>
                        </HeadCell>
                    ))}
                    <HeadCell $col={10} />
                </SheetRow>
                {DATA.map((r) => (
                    <SheetRow key={r.n} $h={r.h}>
                        <RowHead $tone="filtered" $green={r.green}>{r.n}</RowHead>
                        <Cell $col={2}>{r.link && <LinkText>{r.link}</LinkText>}</Cell>
                        <Cell $col={3} $align="center" $line>{r.line}</Cell>
                        <Cell $col={4} $line $pad={2}>{r.date}</Cell>
                        <Cell $col={5} $line $pad={3} $size={THAI}>{r.memo}</Cell>
                        <Cell $col={6} $align="center" $line>{r.acct}</Cell>
                        <Cell $col={7} $line />
                        <Cell $col={8} $align="right" $line $pad={13}>0.00</Cell>
                        <Cell $col={9} $align="right" $line $pad={12}>{r.cr}</Cell>
                        <Cell $col={10} $line $pad={3} $size={THAI}>รา</Cell>
                    </SheetRow>
                ))}
                <SheetRow $h={32}><RowHead>33</RowHead></SheetRow>
                <SheetRow $h={30.230}>
                    <RowHead $tone="selected">34</RowHead>
                    <SelectedCell />
                </SheetRow>
                <SheetRow $h={30.230}>
                    <RowHead>35</RowHead>
                    <Cell $col={8} $align="right" $pad={4} $size={19}>0</Cell>
                    <Cell $col={9} $align="right" $pad={5} $size={19}>24000</Cell>
                </SheetRow>
                {LOWER_ROWS.map((n) => (
                    <SheetRow key={n} $h={30.230}><RowHead>{n}</RowHead></SheetRow>
                ))}
            </SheetBody>
            <GreenCorner />

            <SheetTabs>
                <TabNav>
                    <IconSvg width={13} height={22} viewBox="0 0 13 22"><path d="M13 0v22L0 11z" fill="#707070" /></IconSvg>
                    <IconSvg width={13} height={22} viewBox="0 0 13 22"><path d="M0 0v22l13-11z" fill="#707070" /></IconSvg>
                </TabNav>
                <SheetTab>รายงานสมุดรายวัน</SheetTab>
                <AddSheet>+</AddSheet>
            </SheetTabs>

            <Popup>
                <PopupTitle>เลขผังบัญชี<RedDot /></PopupTitle>
                <PopupBody>
                    <SectionLabel>Sort</SectionLabel>
                    <SortButtons>
                        <SortButton><SortGlyph asc />Ascending</SortButton>
                        <SortButton><SortGlyph asc={false} />Descending</SortButton>
                    </SortButtons>
                    <FieldRow $mt={14}>
                        <FieldLabel $w={96}>By color:</FieldLabel>
                        <PopSelect $w={319}>None<Stepper><StepArrows /></Stepper></PopSelect>
                    </FieldRow>
                    <PopDivider />
                    <SectionLabel $mt={9}>Filter</SectionLabel>
                    <FieldRow $mt={15}>
                        <FieldLabel $w={100}>By color:</FieldLabel>
                        <PopSelect $w={315}>None<Stepper><StepArrows /></Stepper></PopSelect>
                    </FieldRow>
                    <FieldRow $mt={14}>
                        <PopSelect $w={236}>Equals<Stepper><StepArrows /></Stepper></PopSelect>
                        <ValueBox><ValueText>410101 -...</ValueText><ValueDrop><Tri color="#e0e0e0" w={11} h={9} /></ValueDrop></ValueBox>
                    </FieldRow>
                    <RadioRow>
                        <Radio />And
                        <Radio $on $ml={30} />Or
                    </RadioRow>
                    <FieldRow $mt={14}>
                        <PopSelect $w={236}>Equals<Stepper><StepArrows /></Stepper></PopSelect>
                        <ValueBox><ValueText>410101 -...</ValueText><ValueDrop><Tri color="#e0e0e0" w={11} h={9} /></ValueDrop></ValueBox>
                    </FieldRow>
                    <SearchField>
                        <Svg w={20} h={20} sw={1.800} stroke="#ddd"><circle cx="8.500" cy="8.500" r="7" /><path d="M13.500 13.500l5.500 6" /></Svg>
                        <SearchValue>410101<Caret /></SearchValue>
                        <ClearCircle>
                            <Svg w={10} h={10} stroke="#333"><path d="M1 1l8 8M9 1L1 9" /></Svg>
                        </ClearCircle>
                    </SearchField>
                    <ValueList>
                        <ListItem><CheckBox $s={25}><Tick s={20} /></CheckBox>(Select All Search Results</ListItem>
                        <ListItem><CheckBox $s={25}><Tick s={20} /></CheckBox>410101 - P00001</ListItem>
                        <ListItem><CheckBox $s={25}><Tick s={20} /></CheckBox>410101 - P00002</ListItem>
                    </ValueList>
                    <AutoApply><CheckBox $s={21}><Tick s={17} /></CheckBox>Auto Apply</AutoApply>
                    <PopActions>
                        <PopAction $w={135} $off>Apply Filter</PopAction>
                        <PopAction $w={131}>Clear Filter</PopAction>
                    </PopActions>
                </PopupBody>
            </Popup>

            <RedBox $x={1035} $y={530} $w={68} $h={60} />
            <RedBox $x={1105} $y={982} $w={441} $h={59} />
            <RedBox $x={2046} $y={806} $w={501} $h={81} />
            <ArrowLayer width={2560} height={1512}>
                <polygon fill="#ee4528" points={arrowPoints(1200, 430, 1107, 522, 44, 12, 2.500)} />
                <polygon fill="#ee4528" points={arrowPoints(908, 1035, 1102, 1017, 48, 13, 2.500)} />
                <polygon fill="#ee4528" points={arrowPoints(2202, 1004, 2235, 897, 46, 12, 2.500)} />
            </ArrowLayer>
            <Callout $x={1231} $y={383}>1</Callout>
            <Callout $x={857} $y={1014}>2</Callout>
            <Callout $x={2182} $y={1015}>3</Callout>
        </Page>
    );
}
